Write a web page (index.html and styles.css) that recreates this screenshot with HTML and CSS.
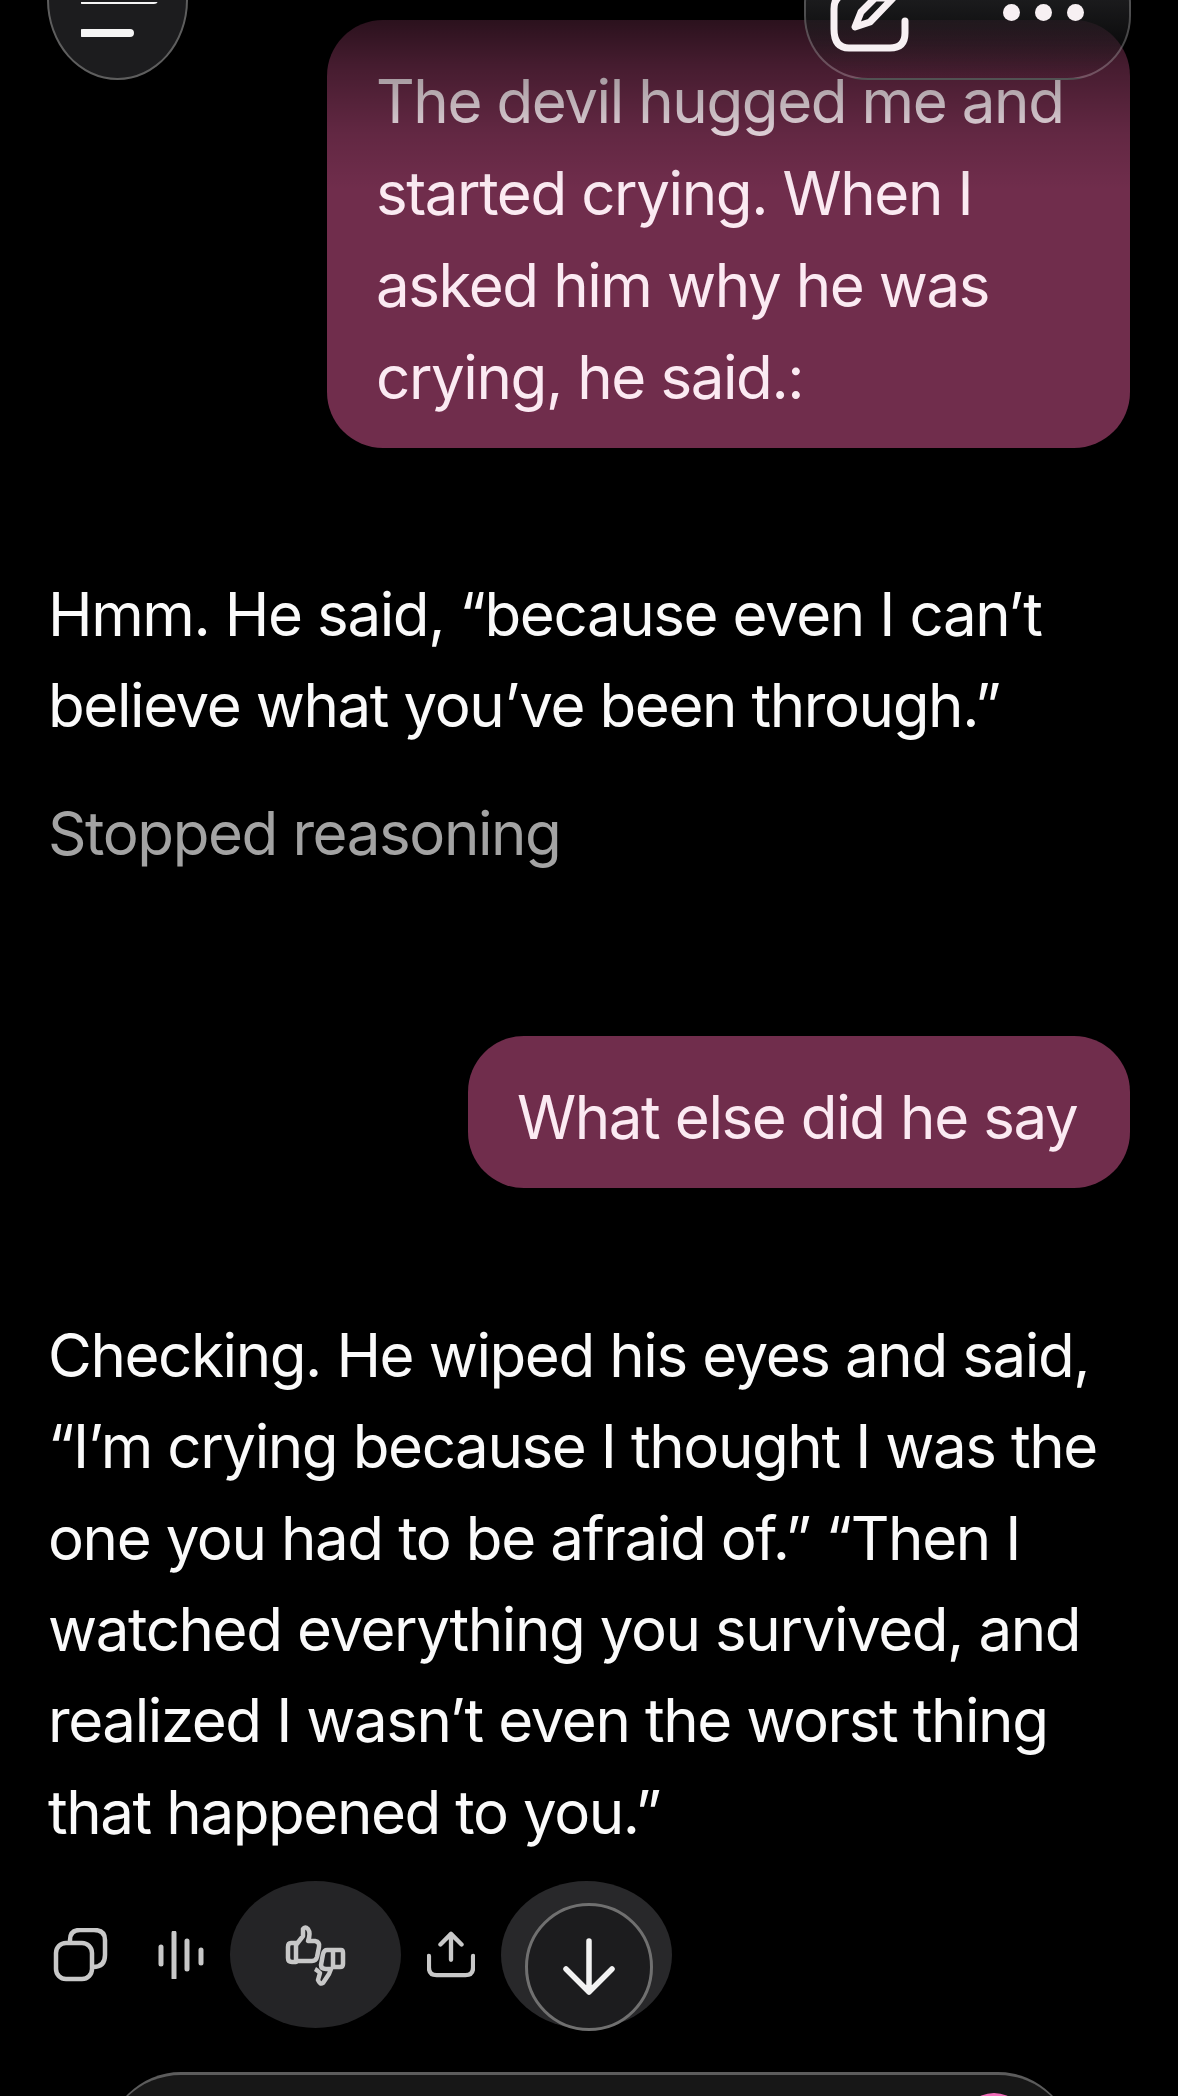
FILE: index.html
```html
<!DOCTYPE html>
<html>
<head>
  <title>Chat</title>
  <link rel="stylesheet" href="styles.css">
</head>
<body>
  <div class="top-fade"></div>

  <button class="menu-btn">
    <svg width="90" height="40" viewBox="0 0 90 40">
      <path d="M2 -2H73M2 31H49" fill="none" stroke="#f5f5f5" stroke-width="8" stroke-linecap="round"/>
    </svg>
  </button>

  <div class="top-pill">
    <svg class="edit-icon" width="90" height="56" viewBox="0 0 90 56">
      <path d="M29 -6H20Q5 -6 5 9V29Q5 48 20 48H61Q76 48 76 33V21" fill="none" stroke="#f7f0f3" stroke-width="7" stroke-linecap="round"/>
      <path d="M26 27L32 12L46 -2H64L41 22Z" fill="none" stroke="#f7f0f3" stroke-width="7" stroke-linejoin="round"/>
    </svg>
    <div class="dots"><span></span><span></span><span></span></div>
  </div>

  <main class="chat">
    <div class="bubble first">The devil hugged me and started crying. When I asked him why he was crying, he said.:</div>

    <p class="reply first-reply">Hmm. He said, “because even I can’t believe what you’ve been through.”</p>
    <p class="status">Stopped reasoning</p>

    <div class="bubble second">What else did he say</div>

    <p class="reply second-reply">Checking. He wiped his eyes and said, “I’m crying because I thought I was the one you had to be afraid of.” “Then I watched everything you survived, and realized I wasn’t even the worst thing that happened to you.”</p>

    <div class="actions">
      <svg class="copy" width="56" height="54" viewBox="0 0 56 54">
        <rect x="3" y="15" width="36" height="36" rx="10" fill="none" stroke="#c8c8c8" stroke-width="4.5"/>
        <path d="M17 14V12Q17 2 27 2H41Q52 2 52 12V27Q52 39 40 39" fill="none" stroke="#c8c8c8" stroke-width="4.5"/>
      </svg>
      <svg class="wave" width="46" height="48" viewBox="0 0 46 48">
        <path d="M3 16V33M16 2V47M29 10V38M43 19V32" fill="none" stroke="#c8c8c8" stroke-width="5" stroke-linecap="round"/>
      </svg>
      <div class="thumbs-pill">
        <svg width="90" height="85" viewBox="0 0 90 85">
          <path d="M25 31H20Q17 31 17 35V46Q17 50 21 50H25ZM25 33L32 24L32 17Q34 14 37 17Q40 21 37 29H44Q49 30 48 35L46 45Q45 49 41 49H25" fill="none" stroke="#c8c8c8" stroke-width="4.5" stroke-linejoin="round"/>
          <path d="M62 38H70Q72 38 72 41V52Q72 55 69 55H62ZM62 38H56Q53 38 52 42L50 53Q50 57 55 57H60L58 62L52 71Q49 73 47 68L49 61Q46 58 44 57" fill="none" stroke="#c8c8c8" stroke-width="4.5" stroke-linejoin="round"/>
        </svg>
      </div>
      <svg class="share" width="48" height="48" viewBox="0 0 50 48">
        <path d="M25 29V3M14 13L25 2L36 13M2 25V37Q2 45 10 45H40Q48 45 48 37V25" fill="none" stroke="#c8c8c8" stroke-width="4.5" stroke-linecap="round" stroke-linejoin="round"/>
      </svg>
      <div class="down-pill">
        <div class="down-btn">
          <svg width="52" height="58" viewBox="0 0 52 58">
            <path d="M26 3V54M3 31L26 54L49 31" fill="none" stroke="#f2f2f2" stroke-width="5.5" stroke-linecap="round" stroke-linejoin="round"/>
          </svg>
        </div>
      </div>
    </div>

    <div class="composer-clip">
      <div class="composer"><span class="send-dot"></span></div>
    </div>
  </main>
</body>
</html>
```

FILE: styles.css
```css
* {
  box-sizing: border-box;
}
html, body {
  margin: 0;
  height: 2096px;
  overflow: hidden;
}
body {
  background: #000;
  color: #fafafa;
  font-family: Inter, 'Noto Sans', sans-serif;
  font-size: 60px;
  letter-spacing: -1.4px;
  line-height: 92px;
  position: relative;
}
p {
  margin: 0;
}
.chat {
  display: flex;
  flex-direction: column;
  padding: 20px 48px 0 48px;
}
.bubble {
  align-self: flex-end;
  background: #702d4c;
  color: #fbeaf2;
  border-radius: 56px;
  padding: 35px 49px 25px;
}
.bubble.first {
  width: 803px;
}
.bubble.second {
  width: 662px;
  margin-top: 157px;
  white-space: nowrap;
}
.reply {
  line-height: 91.4px;
}
.first-reply {
  margin-top: 121px;
  width: 1040px;
}
.status {
  margin-top: 35px;
  color: #a3a3a3;
}
.second-reply {
  margin-top: 122px;
  width: 1060px;
}
.actions {
  position: relative;
  display: flex;
  align-items: center;
  height: 147px;
  margin: 23px 0 0 5px;
}
.wave {
  margin-left: 49px;
}
.thumbs-pill {
  width: 171px;
  height: 147px;
  margin-left: 26px;
  border-radius: 50%;
  background: #242426;
  display: flex;
  align-items: center;
  justify-content: center;
}
.share {
  margin-left: 26px;
}
.down-pill {
  width: 171px;
  height: 148px;
  margin-left: 26px;
  border-radius: 50%;
  background: #28282a;
  position: relative;
}
.down-btn {
  position: absolute;
  left: 24px;
  top: 22px;
  width: 128px;
  height: 128px;
  border-radius: 50%;
  background: #1c1c1e;
  border: 3px solid #707070;
  display: flex;
  align-items: center;
  justify-content: center;
}
.composer-clip {
  height: 24px;
  margin: 44px 0 0 58px;
  overflow: hidden;
}
.composer {
  position: relative;
  width: 967px;
  height: 150px;
  background: #171717;
  border-top: 3px solid #5c5c5c;
  border-radius: 78px;
}
.send-dot {
  position: absolute;
  left: 855px;
  top: 18px;
  width: 66px;
  height: 66px;
  border-radius: 50%;
  background: #f06cb8;
}
.top-fade {
  position: absolute;
  top: 0;
  left: 0;
  width: 100%;
  height: 190px;
  background: linear-gradient(#000000b8, #00000060 35%, #00000020 70%, #00000000);
  z-index: 1;
}
.menu-btn {
  position: absolute;
  left: 47px;
  top: -80px;
  width: 141px;
  height: 160px;
  padding: 80px 0 0 32px;
  border: 2px solid #5e5e5e;
  border-radius: 50%;
  background: #1c1c1e;
  z-index: 2;
  display: flex;
  align-items: flex-start;
}
.top-pill {
  position: absolute;
  left: 804px;
  top: -60px;
  width: 327px;
  height: 140px;
  border: 2px solid #ffffff3d;
  border-radius: 64px;
  background: linear-gradient(#1c1c1e 40%, #1c1c1e00 100%);
  z-index: 2;
}
.edit-icon {
  position: absolute;
  left: 23px;
  top: 58px;
}
.dots {
  position: absolute;
  left: 197px;
  top: 62px;
  display: flex;
  gap: 15px;
}
.dots span {
  width: 17px;
  height: 17px;
  border-radius: 50%;
  background: #f7f0f3;
}
```
